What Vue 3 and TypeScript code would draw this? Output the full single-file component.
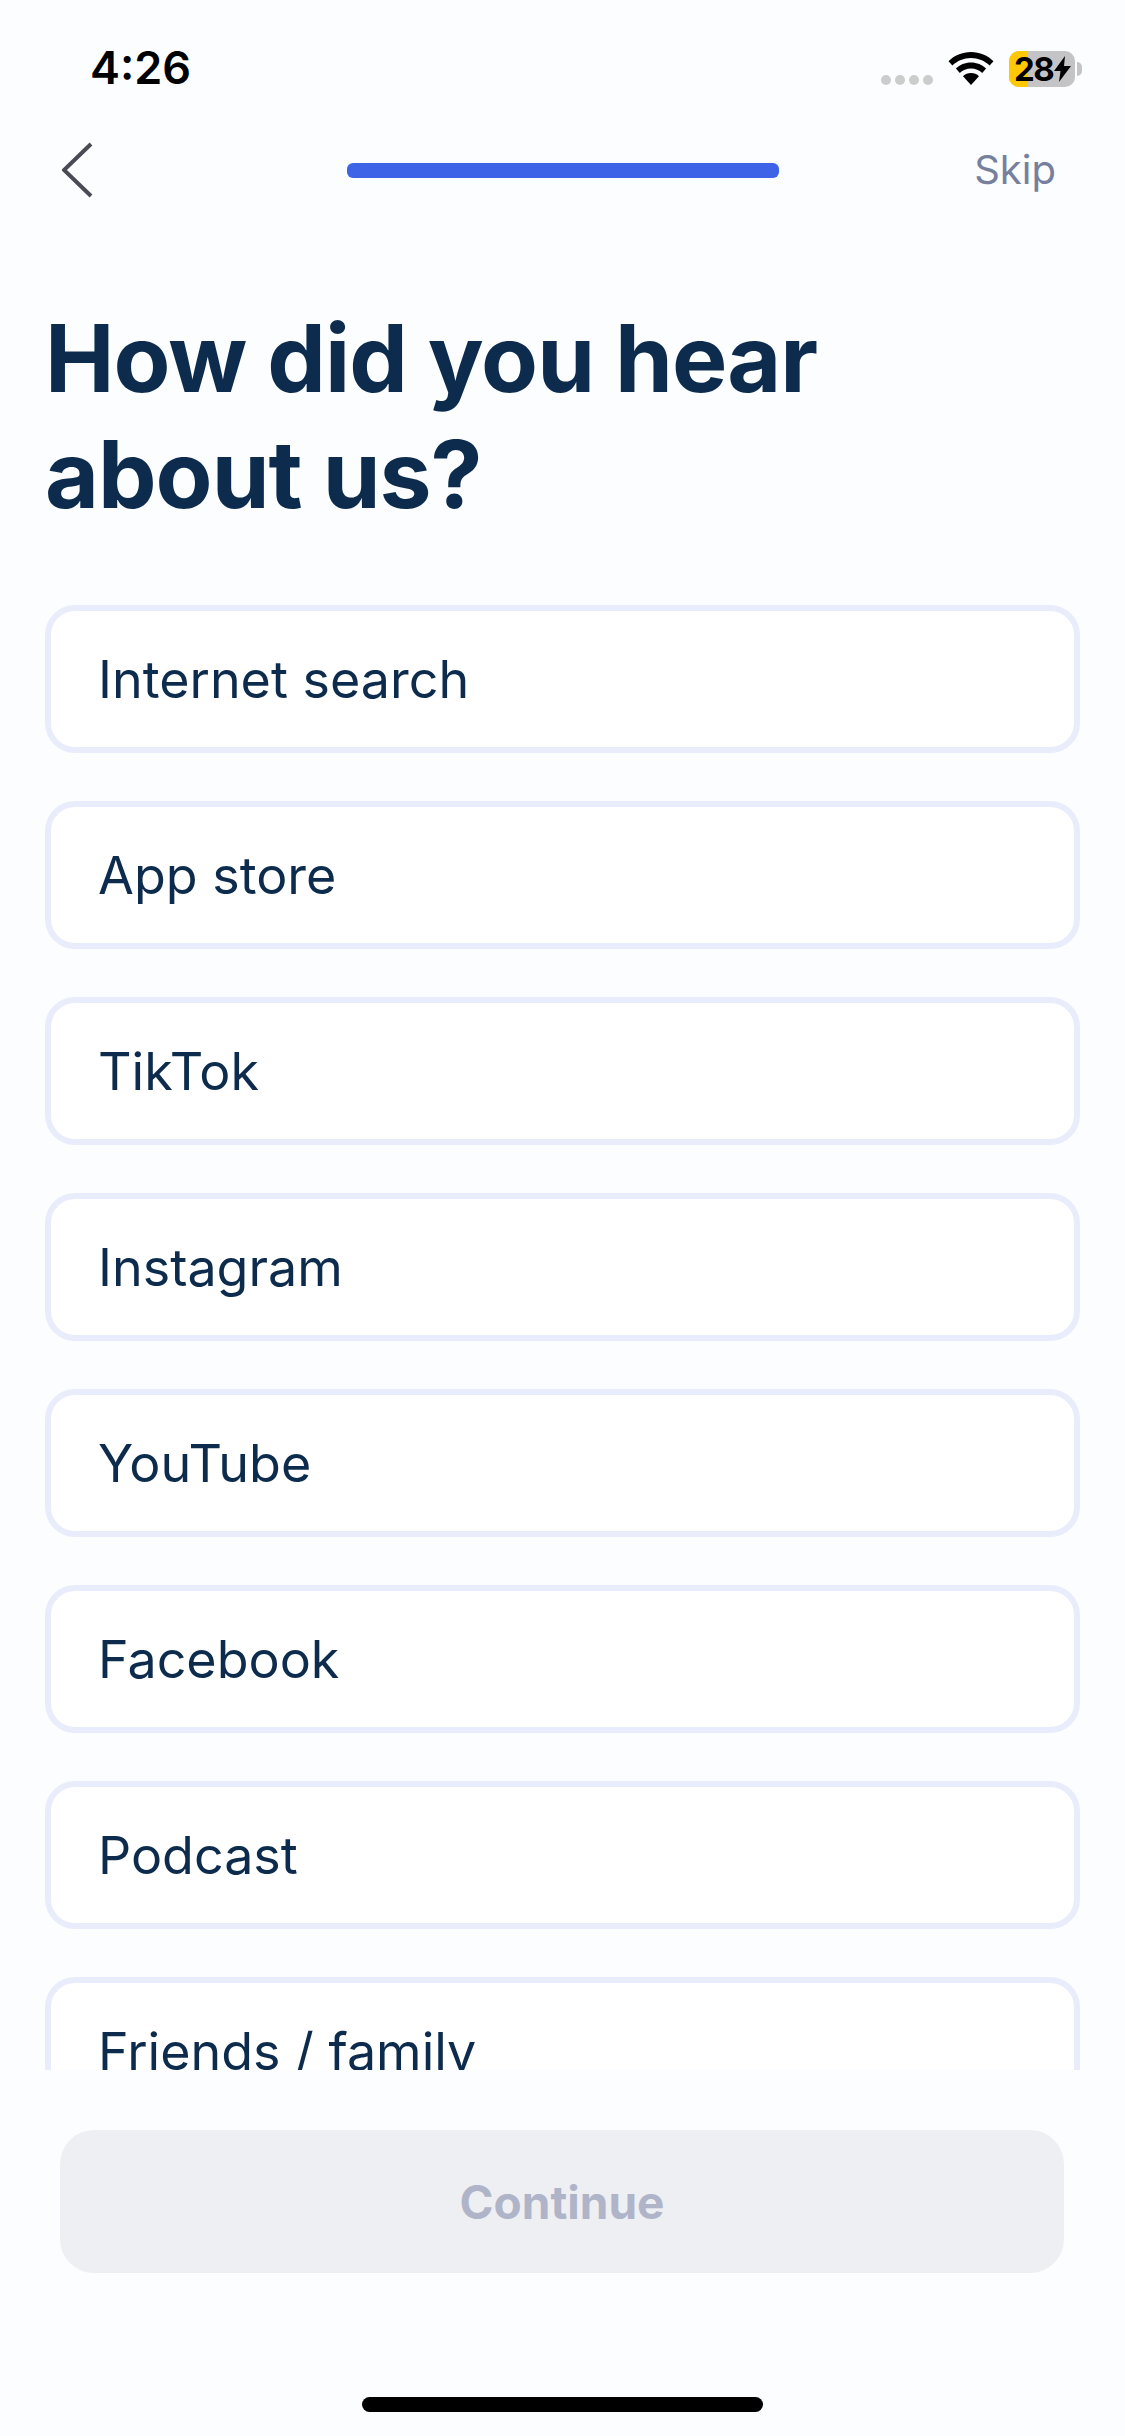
<template>
  <div class="screen">
    <div class="status-bar">
      <span class="time">4:26</span>
      <div class="status-icons">
        <div class="signal">
          <i v-for="n in 4" :key="n" class="signal-dot"></i>
        </div>
        <svg class="wifi" width="46" height="33" viewBox="0 0 46 33">
          <path d="M23 0C14.200 0 6.300 3.500 0.500 9.200L4.400 13.500C9.200 8.900 15.800 6 23 6s13.800 2.900 18.600 7.500l3.900-4.300C39.700 3.500 31.800 0 23 0z" fill="#000" />
          <path d="M23 10.500c-5.900 0-11.200 2.300-15.100 6.100l3.900 4.300c2.900-2.800 6.900-4.500 11.200-4.500s8.300 1.700 11.200 4.500l3.900-4.300C34.200 12.800 28.900 10.500 23 10.500z" fill="#000" />
          <path d="M23 21c-3.100 0-5.900 1.200-8 3.200L23 33l8-8.800C28.900 22.200 26.100 21 23 21z" fill="#000" />
        </svg>
        <div class="battery">
          <div class="battery-body">
            <div class="battery-fill"></div>
            <span class="battery-level">28</span>
            <svg class="bolt" width="17" height="26" viewBox="0 0 17 26">
              <path d="M11 0L0 15h6.500L5 26 17 10h-7z" fill="#000" />
            </svg>
          </div>
          <div class="battery-tip"></div>
        </div>
      </div>
    </div>

    <div class="nav">
      <svg class="back" width="31" height="56" viewBox="0 0 31 56">
        <path d="M29 2L2 28l27 26" fill="none" stroke="#484b53" stroke-width="4" />
      </svg>
      <div class="progress"></div>
      <span class="skip">Skip</span>
    </div>

    <h1 class="title">How did you hear<br />about us?</h1>

    <div class="options">
      <div v-for="option in options" :key="option" class="option">{{ option }}</div>
    </div>

    <div class="footer">
      <button class="continue" type="button" disabled>Continue</button>
      <div class="home-bar"></div>
    </div>
  </div>
</template>

<script setup lang="ts">
const options: string[] = [
  'Internet search',
  'App store',
  'TikTok',
  'Instagram',
  'YouTube',
  'Facebook',
  'Podcast',
  'Friends / family'
]
</script>

<style>
html,
body {
  margin: 0;
  background: #fbfdff;
}
</style>

<style scoped>
.screen {
  width: 1125px;
  height: 2436px;
  display: flex;
  flex-direction: column;
  overflow: hidden;
  background: #fbfdff;
  font-family: Inter, "Liberation Sans", sans-serif;
  color: #0d2c4d;
}

.status-bar {
  height: 132px;
  box-sizing: border-box;
  padding: 44px 43px 0 90px;
  display: flex;
  justify-content: space-between;
  align-items: flex-start;
}

.time {
  font-size: 45px;
  line-height: 48px;
  font-weight: 600;
  color: #000;
}

.status-icons {
  display: flex;
  align-items: flex-start;
  margin-top: 7px;
}

.signal {
  display: flex;
  gap: 4px;
  margin-top: 24px;
  margin-right: 15px;
}

.signal-dot {
  width: 10px;
  height: 10px;
  border-radius: 50%;
  background: #cccccc;
}

.wifi {
  margin-top: 1px;
  margin-right: 15px;
}

.battery {
  display: flex;
  align-items: center;
  gap: 2px;
}

.battery-body {
  position: relative;
  width: 66px;
  height: 36px;
  box-sizing: border-box;
  padding-left: 5px;
  display: flex;
  align-items: center;
  gap: 1px;
  border-radius: 10px;
  background: #c4c4c6;
}

.battery-fill {
  position: absolute;
  left: 0;
  top: 0;
  bottom: 0;
  width: 19px;
  border-radius: 10px 0 0 10px;
  background: #ffc800;
}

.battery-level {
  position: relative;
  font-size: 33px;
  line-height: 36px;
  font-weight: 700;
  letter-spacing: -1.500px;
  color: #000;
}

.bolt {
  position: relative;
  flex: none;
}

.battery-tip {
  width: 5px;
  height: 14px;
  border-radius: 0 5px 5px 0;
  background: #c4c4c6;
}

.nav {
  height: 76px;
  display: flex;
  align-items: center;
  box-sizing: border-box;
  padding: 0 69px 0 62px;
}

.back {
  flex: none;
}

.progress {
  width: 432px;
  height: 15px;
  margin-left: 254px;
  border-radius: 6px;
  background: #3f63e6;
}

.skip {
  margin-left: auto;
  font-size: 40px;
  line-height: 52px;
  color: #76809c;
}

.title {
  margin: 0;
  padding: 92px 45px 0;
  font-size: 93px;
  line-height: 116px;
  font-weight: 700;
  letter-spacing: -1px;
  color: #0d2c4d;
}

.options {
  flex: 1;
  min-height: 0;
  overflow: hidden;
  display: flex;
  flex-direction: column;
  gap: 48px;
  margin-top: 73px;
  padding: 0 45px;
}

.option {
  flex: none;
  height: 148px;
  box-sizing: border-box;
  display: flex;
  align-items: center;
  padding-left: 47px;
  border: 6px solid #e9edfb;
  border-radius: 30px;
  background: #fff;
  font-size: 52px;
  color: #0d2c4d;
}

.footer {
  flex: none;
  height: 366px;
  box-sizing: border-box;
  padding: 60px 61px 0 60px;
  display: flex;
  flex-direction: column;
  align-items: center;
  background: #fbfdff;
}

.continue {
  width: 100%;
  height: 143px;
  border: none;
  border-radius: 34px;
  background: #eeeff2;
  font-family: inherit;
  font-size: 46px;
  font-weight: 700;
  color: #b0b4c8;
}

.home-bar {
  width: 401px;
  height: 15px;
  margin-top: 124px;
  border-radius: 8px;
  background: #000;
}
</style>
